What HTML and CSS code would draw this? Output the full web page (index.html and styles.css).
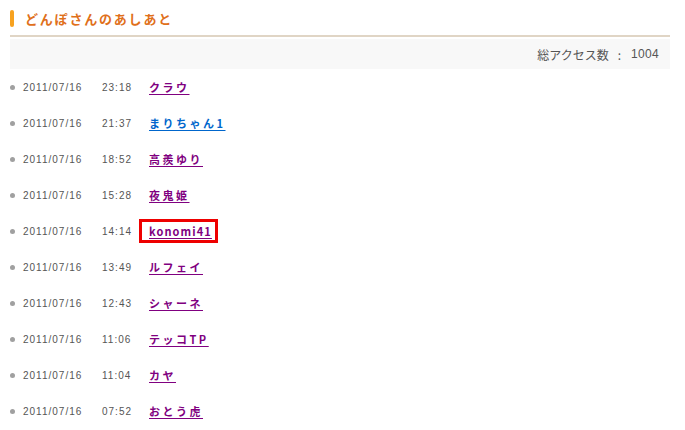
FILE: index.html
```html
<!DOCTYPE html>
<html lang="ja">
<head>
<meta charset="utf-8">
<link rel="stylesheet" href="styles.css">
</head>
<body>
<div class="page">
  <h2 class="title"><span class="bar"></span><span class="title-text">どんぽさんのあしあと</span></h2>
  <div class="rule"></div>
  <div class="counter"><span>総アクセス数</span><span class="colon">:</span><span class="count">1004</span></div>
  <ul class="list">
    <li><span class="date">2011/07/16</span><span class="time">23:18</span><a class="name" href="#">クラウ</a></li>
    <li><span class="date">2011/07/16</span><span class="time">21:37</span><a class="name unvisited" href="#">まりちゃん1</a></li>
    <li><span class="date">2011/07/16</span><span class="time">18:52</span><a class="name" href="#">高羨ゆり</a></li>
    <li><span class="date">2011/07/16</span><span class="time">15:28</span><a class="name" href="#">夜鬼姫</a></li>
    <li><span class="date">2011/07/16</span><span class="time">14:14</span><a class="name boxed" href="#">konomi41</a></li>
    <li><span class="date">2011/07/16</span><span class="time">13:49</span><a class="name" href="#">ルフェイ</a></li>
    <li><span class="date">2011/07/16</span><span class="time">12:43</span><a class="name" href="#">シャーネ</a></li>
    <li><span class="date">2011/07/16</span><span class="time">11:06</span><a class="name" href="#">テッコTP</a></li>
    <li><span class="date">2011/07/16</span><span class="time">11:04</span><a class="name" href="#">カヤ</a></li>
    <li><span class="date">2011/07/16</span><span class="time">07:52</span><a class="name" href="#">おとう虎</a></li>
  </ul>
</div>
</body>
</html>
```

FILE: styles.css
```css
html, body {
  margin: 0;
  padding: 0;
  background: #ffffff;
}
body {
  font-family: "Liberation Sans", "Noto Sans CJK JP", sans-serif;
  color: #555555;
}
.page {
  width: 660px;
  padding: 10px 0 0 10px;
}
.title {
  margin: 0;
  height: 17px;
  display: flex;
  align-items: center;
  gap: 11px;
}
.bar {
  width: 4px;
  height: 17px;
  border-radius: 2px;
  background: #f7a21f;
}
.title-text {
  font-family: "Noto Sans CJK JP", sans-serif;
  font-size: 13px;
  font-weight: bold;
  letter-spacing: 1.8px;
  color: #e0701b;
  line-height: 17px;
}
.rule {
  margin-top: 8px;
  height: 2px;
  background: #e0d5c5;
}
.counter {
  margin-top: 2px;
  height: 30px;
  background: #f8f8f8;
  display: flex;
  align-items: center;
  justify-content: flex-end;
  padding-right: 11px;
  font-family: "Noto Sans CJK JP", sans-serif;
  font-size: 12px;
  color: #555555;
}
.colon {
  margin: 0 10px 0 9px;
}
.count {
  font-family: "Liberation Sans Narrow", "Liberation Sans", sans-serif;
  font-size: 12px;
  letter-spacing: 0.3px;
}
.list {
  list-style: none;
  margin: 0;
  padding: 0;
}
.list li {
  height: 36px;
  display: flex;
  align-items: center;
}
.list li::before {
  content: "";
  width: 5px;
  height: 5px;
  border-radius: 50%;
  background: #a0a0a0;
  margin-right: 8px;
}
.date {
  width: 79px;
  font-size: 10px;
  letter-spacing: 1px;
  color: #555555;
}
.time {
  width: 47px;
  font-size: 10px;
  letter-spacing: 1px;
  color: #555555;
}
.name {
  font-family: "Noto Sans CJK JP", sans-serif;
  font-size: 11px;
  font-weight: bold;
  letter-spacing: 2.5px;
  color: #800080;
  text-decoration: underline;
  text-underline-offset: 2px;
  line-height: 16px;
}
.name.unvisited {
  color: #0066cc;
}
.name.boxed {
  border: 3px solid #ee0000;
  padding: 1px 3px 1px 7px;
  margin-left: -10px;
  letter-spacing: 1.1px;
}
```
